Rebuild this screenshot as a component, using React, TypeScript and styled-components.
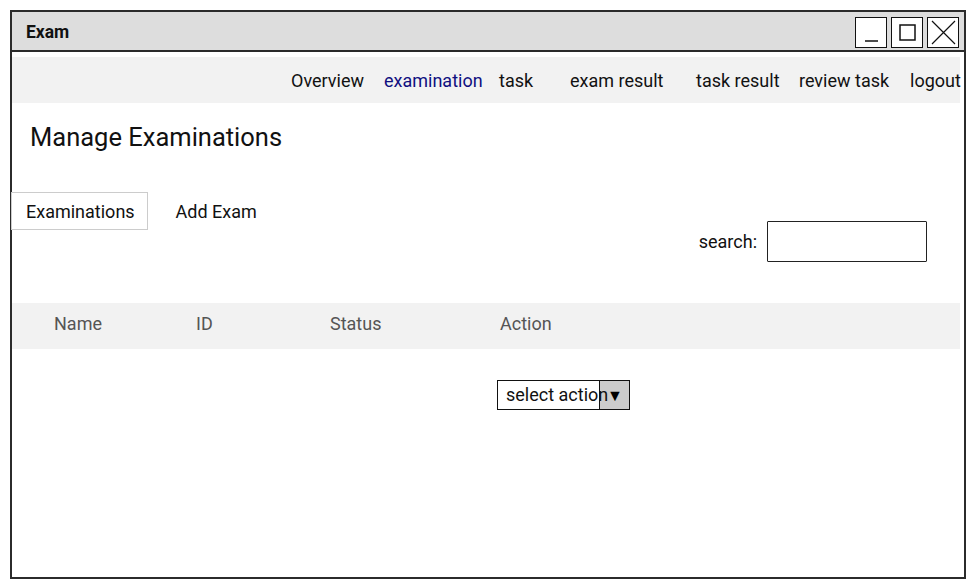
import styled, {createGlobalStyle} from "styled-components";

const GlobalStyle = createGlobalStyle`
  body {
    margin: 0;
    background: #ffffff;
    font-family: Roboto, "Liberation Sans", sans-serif;
    color: #111;
  }
`;

const Window = styled.div`
  margin: 10px 0 0 10px;
  width: 956px;
  height: 569px;
  box-sizing: border-box;
  border: 2px solid #2b2b2b;
  display: flex;
  flex-direction: column;
  background: #fff;
`;

const TitleBar = styled.div`
  height: 38px;
  border-bottom: 2px solid #2b2b2b;
  background: #dddddd;
  display: flex;
  align-items: center;
  justify-content: space-between;
  padding: 0 5px 0 14px;
`;

const Title = styled.span`
  font-weight: 700;
  font-size: 17.5px;
  margin-top: 2px;
`;

const Controls = styled.div`
  display: flex;
  gap: 4px;
  margin-top: 3px;
`;

const ControlButton = styled.div`
  width: 30px;
  height: 29px;
  border: 1.5px solid #111;
  background: #fff;
  display: flex;
  align-items: center;
  justify-content: center;
`;

const NavBar = styled.nav`
  height: 46px;
  margin: 5px 4px 0 0;
  background: #f2f2f2;
  display: flex;
  align-items: center;
  padding-left: 279px;
`;

const NavItem = styled.span<{ $w: number; $active?: boolean }>`
  width: ${(p) => p.$w}px;
  flex-shrink: 0;
  font-size: 18px;
  white-space: nowrap;
  color: ${(p) => (p.$active ? "#101080" : "#111")};
`;

const Heading = styled.h1`
  margin: 20px 0 0 18px;
  font-size: 25.5px;
  font-weight: 400;
  line-height: 28px;
`;

const Toolbar = styled.div`
  display: flex;
  justify-content: space-between;
  align-items: flex-start;
  margin-top: 41px;
  padding-right: 37px;
`;

const Tabs = styled.div`
  display: flex;
  align-items: center;
  gap: 27px;
  margin-left: -1px;
`;

const Tab = styled.div<{ $selected?: boolean }>`
  height: 38px;
  box-sizing: border-box;
  display: flex;
  align-items: center;
  padding: ${(p) => (p.$selected ? "0 12px 0 14px" : "0")};
  font-size: 18px;
  border: 1px solid ${(p) => (p.$selected ? "#cccccc" : "transparent")};
`;

const SearchGroup = styled.label`
  display: flex;
  align-items: center;
  gap: 10px;
  margin-top: 29px;
  font-size: 18px;
`;

const SearchBox = styled.div`
  width: 160px;
  height: 41px;
  box-sizing: border-box;
  border: 1.5px solid #222;
  border-radius: 1px;
`;

const Grid = styled.div`
  display: grid;
  grid-template-columns: 142px 134px 170px 1fr;
  padding-left: 42px;
  margin-right: 4px;
`;

const TableHead = styled(Grid)`
  margin-top: 41px;
  height: 46px;
  box-sizing: border-box;
  padding-bottom: 6px;
  align-items: center;
  background: #f2f2f2;
  color: #555;
  font-size: 18px;
`;

const TableRow = styled(Grid)`
  margin-top: 31px;
`;

const Select = styled.div`
  grid-column: 4;
  margin-left: -3px;
  width: 133px;
  height: 30px;
  box-sizing: border-box;
  border: 1.5px solid #111;
  display: flex;
  position: relative;
  font-size: 18px;
  overflow: hidden;
`;

const SelectText = styled.span`
  position: relative;
  z-index: 1;
  padding-left: 8px;
  line-height: 27px;
  white-space: nowrap;
`;

const SelectArrow = styled.div`
  position: absolute;
  right: 0;
  top: 0;
  bottom: 0;
  width: 30px;
  box-sizing: border-box;
  background: #cccccc;
  border-left: 1.5px solid #111;
  display: flex;
  align-items: center;
  padding-left: 7px;
  font-size: 16px;
  color: #000;
`;

const navItems = [
    {label: "Overview", w: 93},
    {label: "examination", w: 115, active: true},
    {label: "task", w: 71},
    {label: "exam result", w: 126},
    {label: "task result", w: 103},
    {label: "review task", w: 111},
    {label: "logout", w: 52},
];

export default function App() {
    return (
        <>
            <GlobalStyle/>
            <Window>
                <TitleBar>
                    <Title>Exam</Title>
                    <Controls>
                        <ControlButton>
                            <svg width="29" height="29" viewBox="0 0 29 29">
                                <line x1="8" y1="23" x2="21" y2="23" stroke="#111" strokeWidth="1.5"/>
                            </svg>
                        </ControlButton>
                        <ControlButton>
                            <svg width="29" height="29" viewBox="0 0 29 29">
                                <rect x="7" y="7" width="15" height="15" fill="none" stroke="#111" strokeWidth="1.5"/>
                            </svg>
                        </ControlButton>
                        <ControlButton>
                            <svg width="29" height="29" viewBox="0 0 29 29">
                                <path d="M3 3 L26 26 M26 3 L3 26" stroke="#111" strokeWidth="1.2"/>
                            </svg>
                        </ControlButton>
                    </Controls>
                </TitleBar>
                <NavBar>
                    {navItems.map((item) => (
                        <NavItem key={item.label} $w={item.w} $active={item.active}>
                            {item.label}
                        </NavItem>
                    ))}
                </NavBar>
                <Heading>Manage Examinations</Heading>
                <Toolbar>
                    <Tabs>
                        <Tab $selected>Examinations</Tab>
                        <Tab>Add Exam</Tab>
                    </Tabs>
                    <SearchGroup>
                        search:
                        <SearchBox/>
                    </SearchGroup>
                </Toolbar>
                <TableHead>
                    <span>Name</span>
                    <span>ID</span>
                    <span>Status</span>
                    <span>Action</span>
                </TableHead>
                <TableRow>
                    <Select>
                        <SelectText>select action</SelectText>
                        <SelectArrow>▼</SelectArrow>
                    </Select>
                </TableRow>
            </Window>
        </>
    );
}
